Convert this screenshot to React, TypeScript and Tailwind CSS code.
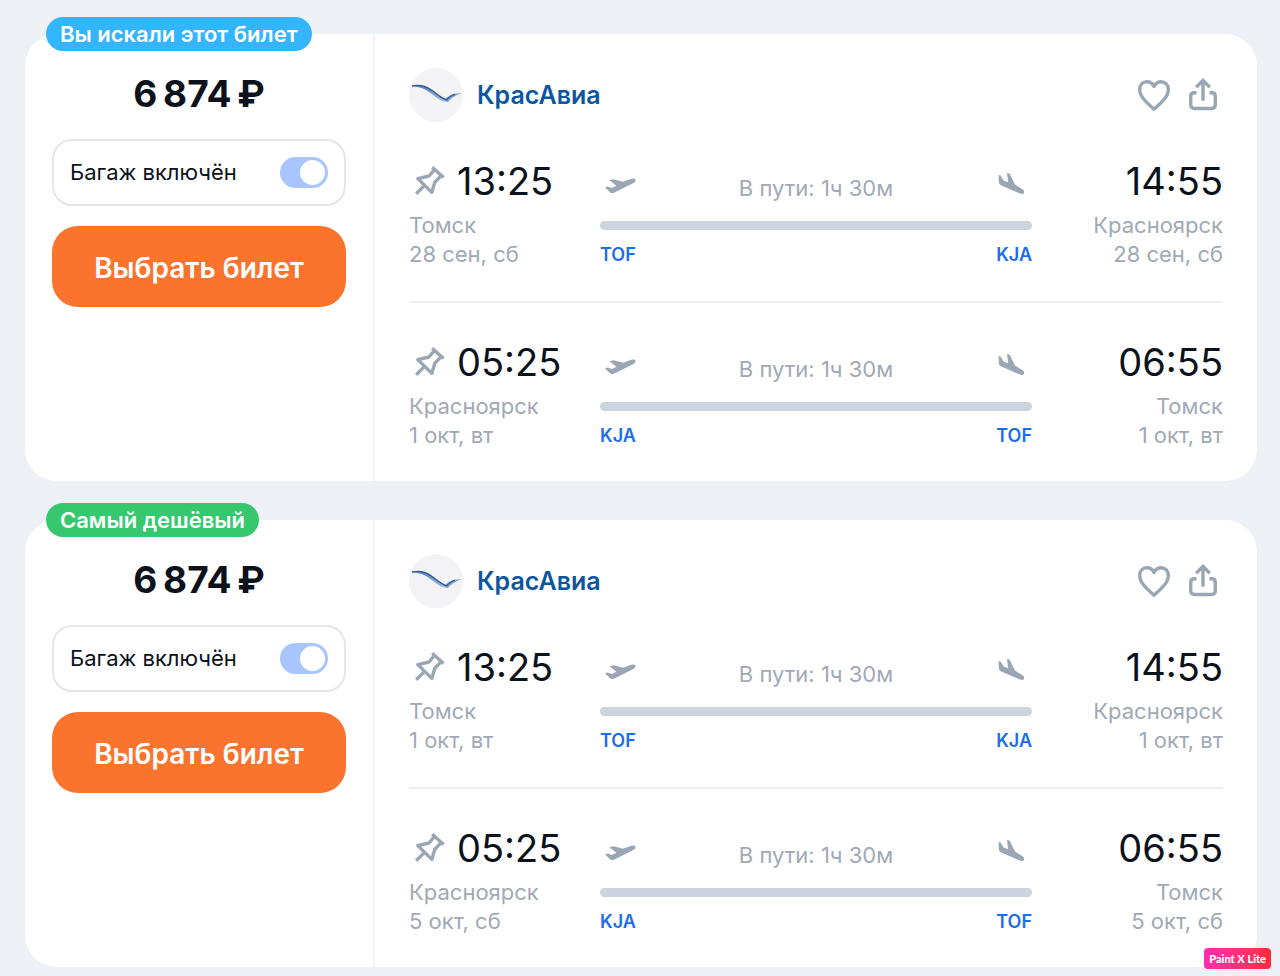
import { useId, useState } from 'react';
import clsx from 'clsx';

type Stop = {
  time: string;
  city: string;
  date: string;
  code: string;
};

type Leg = {
  from: Stop;
  to: Stop;
  duration: string;
};

type Ticket = {
  id: number;
  badge: string;
  badgeColor: string;
  price: string;
  airline: string;
  legs: Leg[];
};

const tickets: Ticket[] = [
  {
    id: 1,
    badge: 'Вы искали этот билет',
    badgeColor: 'bg-[#33b5ff]',
    price: '6\u2009874\u2009₽',
    airline: 'КрасАвиа',
    legs: [
      {
        from: { time: '13:25', city: 'Томск', date: '28 сен, сб', code: 'TOF' },
        to: { time: '14:55', city: 'Красноярск', date: '28 сен, сб', code: 'KJA' },
        duration: '1ч 30м',
      },
      {
        from: { time: '05:25', city: 'Красноярск', date: '1 окт, вт', code: 'KJA' },
        to: { time: '06:55', city: 'Томск', date: '1 окт, вт', code: 'TOF' },
        duration: '1ч 30м',
      },
    ],
  },
  {
    id: 2,
    badge: 'Самый дешёвый',
    badgeColor: 'bg-[#36c76f]',
    price: '6\u2009874\u2009₽',
    airline: 'КрасАвиа',
    legs: [
      {
        from: { time: '13:25', city: 'Томск', date: '1 окт, вт', code: 'TOF' },
        to: { time: '14:55', city: 'Красноярск', date: '1 окт, вт', code: 'KJA' },
        duration: '1ч 30м',
      },
      {
        from: { time: '05:25', city: 'Красноярск', date: '5 окт, сб', code: 'KJA' },
        to: { time: '06:55', city: 'Томск', date: '5 окт, сб', code: 'TOF' },
        duration: '1ч 30м',
      },
    ],
  },
];

function HeartIcon() {
  return (
    <svg width="34" height="34" viewBox="0 0 34 34" fill="none" stroke="currentColor" strokeWidth="3.4" strokeLinejoin="round">
      <path d="M17 8.4C15.4 5.2 12.8 3.8 10 3.8C5.6 3.8 2.7 7 2.7 11.4C2.7 18.4 9 24.2 17 31.2C25 24.2 31.3 18.4 31.3 11.4C31.3 7 28.4 3.8 24 3.8C21.2 3.8 18.6 5.2 17 8.4Z" />
    </svg>
  );
}

function ShareIcon() {
  return (
    <svg width="34" height="34" viewBox="0 0 34 34" fill="none" stroke="currentColor" strokeWidth="3.4">
      <path d="M17 22.8V2.6M10.2 9.2L17 2.4L23.8 9.2" />
      <path d="M10.6 14.7H8.4Q4.7 14.7 4.7 18.4V26.8Q4.7 30.5 8.4 30.5H25.6Q29.3 30.5 29.3 26.8V18.4Q29.3 14.7 25.6 14.7H23.4" />
    </svg>
  );
}

function PinIcon() {
  return (
    <svg width="32" height="32" viewBox="0 0 32 32" fill="none" stroke="currentColor" strokeWidth="3.4" strokeLinejoin="round">
      <path d="M19.2 2.2L30.6 12.6" />
      <path d="M21.6 4.4L16 11L4.8 13.6L18.8 27.4L21.8 17.2L28.2 10.6" />
      <path d="M11.6 20.4L3.2 28.8" />
    </svg>
  );
}

function TakeoffIcon() {
  return (
    <svg width="32" height="40" viewBox="0 0 32 40" fill="currentColor">
      <path d="M5.5 12.2L9.6 11.2L19 13.8L27.5 10.8Q30.6 9.8 31.6 11.8Q32 13.8 29.4 15.1L10 24.8Q8 25.8 6.4 24.6L1 19.6L3.6 18.6L8 20L12.4 17.8Z" />
    </svg>
  );
}

function LandingIcon() {
  return (
    <svg width="32" height="40" viewBox="0 0 32 40" fill="currentColor">
      <path d="M2.6 7L4.6 7.6L7.6 12.6L12.2 14.2L11 5L13.6 5.6L19 16.6L26.6 21.2Q28.8 23 28 25.2Q26.6 26.6 24 25.6L4.8 17.2Q2.8 16.2 2.8 13.8Z" />
    </svg>
  );
}

function AirlineLogo() {
  const gradientId = useId();

  return (
    <svg width="54" height="54" viewBox="0 0 54 54" aria-hidden="true">
      <defs>
        <linearGradient id={gradientId} x1="0" y1="1" x2="0.5" y2="0">
          <stop offset="0" stopColor="#c3dcf5" />
          <stop offset="0.5" stopColor="#8fb4de" />
          <stop offset="1" stopColor="#3c6fb0" />
        </linearGradient>
      </defs>
      <circle cx="27" cy="27" r="27" fill="#f3f3f6" />
      <path
        d="M3 18C11 16 17 18 22 21.4C27 25 31 29 37 30.8L38.4 34.2C33 33.4 29.6 31.6 26 28.6C19 22.8 14 18.8 3 18.4Z"
        fill={`url(#${gradientId})`}
      />
      <path d="M36 31C40.4 26.4 46 24.8 52.6 25.4C47.4 26.8 43.6 29 38.6 34.2Z" fill="#86a9d6" />
      <path
        d="M3 18C11 16.4 17 18.2 22 21.8C27.4 25.6 31.4 29.4 37.4 32C40.8 28.6 43.4 27 46 26.4"
        fill="none"
        stroke="#34598f"
        strokeWidth="1.3"
      />
    </svg>
  );
}

function FlightLeg({ leg }: { leg: Leg }) {
  return (
    <div className="flex">
      <div className="w-[191px] shrink-0">
        <div className="flex h-12 items-center gap-3 pl-1">
          <button type="button" aria-label="Закрепить" className="text-[#9ba6b4]">
            <PinIcon />
          </button>
          <span className="text-[38px] leading-[48px] text-[#0b121b]">{leg.from.time}</span>
        </div>
        <div className="mt-[6px] text-[22px] leading-[29px] text-[#a0a9b5]">
          <p>{leg.from.city}</p>
          <p>{leg.from.date}</p>
        </div>
      </div>

      <div className="min-w-0 flex-1">
        <div className="flex h-[62px] items-center justify-between px-1 text-[#9ba6b4]">
          <TakeoffIcon />
          <span className="text-[22px] leading-[29px] text-[#a0a9b5]">В пути: {leg.duration}</span>
          <LandingIcon />
        </div>
        <div className="mt-[2px] h-[9px] rounded-full bg-[#ccd4e0]"></div>
        <div className="mt-[10px] flex justify-between text-[18px] leading-[29px] font-semibold text-[#1a6cf0]">
          <span>{leg.from.code}</span>
          <span>{leg.to.code}</span>
        </div>
      </div>

      <div className="w-[191px] shrink-0 text-right">
        <p className="text-[38px] leading-[48px] text-[#0b121b]">{leg.to.time}</p>
        <div className="mt-[6px] text-[22px] leading-[29px] text-[#a0a9b5]">
          <p>{leg.to.city}</p>
          <p>{leg.to.date}</p>
        </div>
      </div>
    </div>
  );
}

function TicketCard({ ticket }: { ticket: Ticket }) {
  const [withBaggage, setWithBaggage] = useState(true);
  const baggageId = useId();

  return (
    <article className="relative flex rounded-[32px] bg-white">
      <span
        className={clsx(
          'absolute -top-[17px] left-[21px] rounded-full px-[14px] text-[22px] leading-[34px] font-semibold text-white',
          ticket.badgeColor
        )}
      >
        {ticket.badge}
      </span>

      {/* Price and purchase */}
      <div className="w-[350px] shrink-0 border-r-2 border-[#f0f2f6] px-[27px] pt-9">
        <p className="text-center text-[37px] leading-[48px] font-bold text-[#0b121b]">{ticket.price}</p>
        <div className="mt-[21px] flex h-[67px] items-center justify-between rounded-[20px] border-2 border-[#e5e6e9] px-4">
          <label htmlFor={baggageId} className="text-[22px] leading-[29px] text-[#0b121b]">
            Багаж включён
          </label>
          <input
            id={baggageId}
            type="checkbox"
            role="switch"
            checked={withBaggage}
            onChange={(e) => setWithBaggage(e.target.checked)}
            className="flex h-[31px] w-12 appearance-none items-center rounded-full bg-gray-300 px-[3px] before:size-[25px] before:rounded-full before:bg-white checked:justify-end checked:bg-[#a9c5fd]"
          />
        </div>
        <button
          type="button"
          className="mt-5 h-[81px] w-full rounded-[26px] bg-[#fa742d] pt-[2px] text-[28px] font-semibold text-white"
        >
          Выбрать билет
        </button>
      </div>

      {/* Flight details */}
      <div className="min-w-0 flex-1 pt-[34px] pr-[34px] pb-[31px] pl-[34px]">
        <header className="flex items-center justify-between">
          <div className="flex items-center gap-[14px]">
            <AirlineLogo />
            <h2 className="text-[25px] leading-8 font-semibold text-[#0c569f]">{ticket.airline}</h2>
          </div>
          <div className="flex gap-[15px] pr-[3px] text-[#9ba6b4]">
            <button type="button" aria-label="В избранное">
              <HeartIcon />
            </button>
            <button type="button" aria-label="Поделиться">
              <ShareIcon />
            </button>
          </div>
        </header>

        <div className="mt-[35px]">
          <FlightLeg leg={ticket.legs[0]} />
          <hr className="mt-8 mb-[35px] border-t-2 border-[#edf0f3]" />
          <FlightLeg leg={ticket.legs[1]} />
        </div>
      </div>
    </article>
  );
}

export default function App() {
  return (
    <main className="min-h-screen bg-[#edf1f6] pt-[34px] pr-[23px] pb-[9px] pl-[25px] font-['Inter',sans-serif]">
      <div className="flex flex-col gap-[39px]">
        {tickets.map((ticket) => (
          <TicketCard key={ticket.id} ticket={ticket} />
        ))}
      </div>

      <div className="fixed right-[9px] bottom-[7px] rounded-[4px] bg-linear-to-r from-[#ff2bb0] to-[#ff2a35] px-[5px] font-['Lato',sans-serif] text-[11px] leading-[21px] font-black text-white">
        Paint X Lite
      </div>
    </main>
  );
}
